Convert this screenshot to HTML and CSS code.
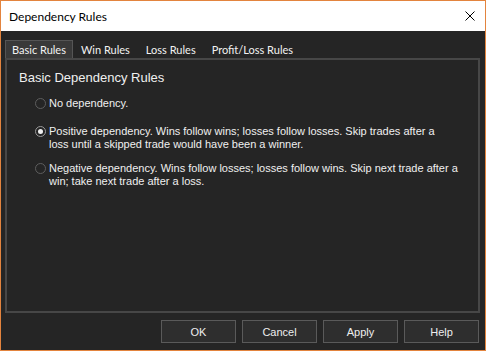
FILE: index.html
```html
<!DOCTYPE html>
<html lang="en">
<head>
    <meta charset="UTF-8">
    <title>Dependency Rules</title>
    <link rel="stylesheet" href="styles.css">
</head>
<body>
    <div class="window">
        <div class="titlebar">
            <span class="title">Dependency Rules</span>
            <svg class="close" width="10" height="10" viewBox="0 0 10 10">
                <path d="M0.5 0.5 L9.5 9.5 M9.5 0.5 L0.5 9.5" stroke="#000" stroke-width="1"/>
            </svg>
        </div>
        <div class="content">
            <div class="tabs">
                <div class="tab active">Basic Rules</div>
                <div class="tab">Win Rules</div>
                <div class="tab">Loss Rules</div>
                <div class="tab">Profit/Loss Rules</div>
            </div>
            <div class="panel">
                <div class="group-title">Basic Dependency Rules</div>
                <div class="option first">
                    <span class="radio"></span>
                    <span class="label">No dependency.</span>
                </div>
                <div class="option second">
                    <span class="radio checked"></span>
                    <span class="label">Positive dependency. Wins follow wins; losses follow losses. Skip trades after a<br>loss until a skipped trade would have been a winner.</span>
                </div>
                <div class="option">
                    <span class="radio"></span>
                    <span class="label">Negative dependency. Wins follow losses; losses follow wins. Skip next trade after a<br>win; take next trade after a loss.</span>
                </div>
            </div>
            <div class="buttons">
                <div class="button">OK</div>
                <div class="button">Cancel</div>
                <div class="button">Apply</div>
                <div class="button">Help</div>
            </div>
        </div>
    </div>
</body>
</html>
```

FILE: styles.css
```css
body {
    margin: 0;
    background: #252525;
}
.window {
    width: 486px;
    height: 351px;
    box-sizing: border-box;
    border: 1px solid #e3843e;
    background: #252525;
    display: flex;
    flex-direction: column;
}
.titlebar {
    height: 30px;
    background: #ffffff;
    display: flex;
    align-items: center;
    justify-content: space-between;
    padding: 0 10px 0 8px;
    font-family: Lato, "Noto Sans", sans-serif;
    font-size: 12px;
    color: #000000;
}
.close {
    display: block;
}
.content {
    flex: 1;
    padding: 9px 5px 0 4px;
    display: flex;
    flex-direction: column;
}
.tabs {
    display: flex;
    height: 18px;
    font-family: Lato, "Noto Sans", sans-serif;
    font-size: 11px;
    color: #f2f2f2;
}
.tab {
    padding: 0 7px;
    line-height: 18px;
    border: 1px solid transparent;
    border-bottom: none;
}
.tab.active {
    background: #393939;
    border-color: #555555;
    padding: 0 6px;
}
.panel {
    height: 255px;
    box-sizing: border-box;
    border: 2px solid #474747;
    padding: 10px 12px 0 12px;
    font-family: "Liberation Sans", Arial, sans-serif;
    color: #f0f0f0;
}
.group-title {
    font-size: 13px;
    line-height: 15px;
}
.option {
    display: flex;
    align-items: flex-start;
    margin-left: 16px;
    font-size: 11px;
    line-height: 13px;
    margin-bottom: 11px;
}
.option.first {
    margin-top: 12px;
    margin-bottom: 15px;
}
.radio {
    width: 11px;
    height: 11px;
    box-sizing: border-box;
    border: 1px solid #5e5e5e;
    border-radius: 50%;
    margin: 1px 3px 0 0;
    flex-shrink: 0;
    display: flex;
    align-items: center;
    justify-content: center;
}
.radio.checked {
    border-color: #9a9a9a;
}
.radio.checked::after {
    content: "";
    width: 5px;
    height: 5px;
    border-radius: 50%;
    background: #f0f0f0;
}
.buttons {
    display: flex;
    justify-content: flex-end;
    gap: 6px;
    margin-top: 7px;
    padding-right: 1px;
}
.button {
    width: 75px;
    height: 23px;
    box-sizing: border-box;
    border: 1px solid #5a5a5a;
    background: #2e2e2e;
    color: #eeeeee;
    font-family: "Liberation Sans", Arial, sans-serif;
    font-size: 11px;
    display: flex;
    align-items: center;
    justify-content: center;
}
```
